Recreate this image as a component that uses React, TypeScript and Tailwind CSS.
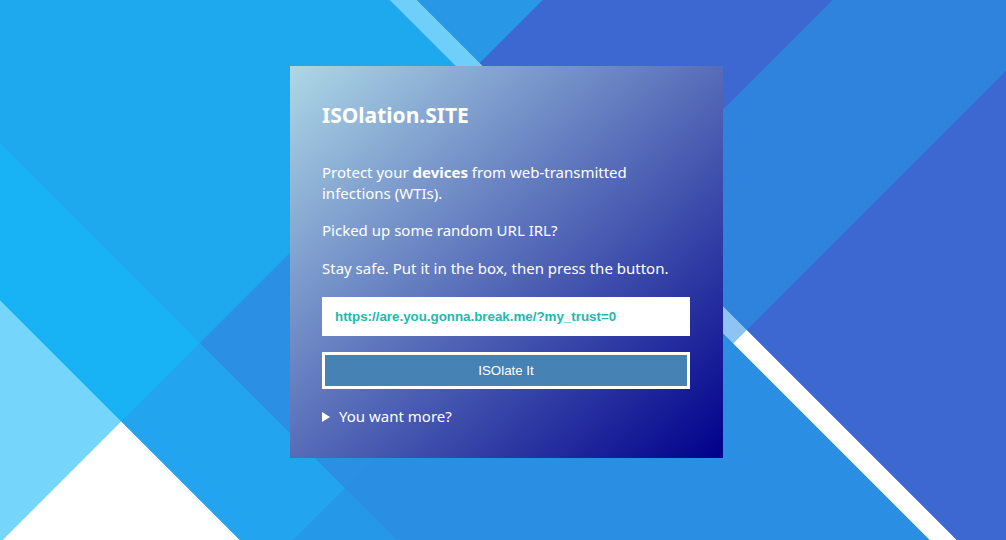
import React from 'react';

// diagonal bands of the backdrop: s = x + y ("/" lines), d = x - y ("\" lines)
const sCuts = [-3000, 543, 833, 1077, 4000];
const dCuts = [-3000, -300, -143, 390, 417, 3000];

const palette = [
  ['#76D5FB', '#18B3F4', '#1EA9EE', '#6FCFF8', '#2898E6'],
  ['#FFFFFF', '#22A4EF', '#2B8FE3', '#8DC4F3', '#3D68D2'],
  ['#FFFFFF', '#2598E7', '#2A8FE3', '#8DC4F3', '#3083DD'],
  ['#FFFFFF', '#2598E7', '#2A8FE3', '#FFFFFF', '#3D68D2'],
];

function cell(s1: number, s2: number, d1: number, d2: number) {
  const pt = (s: number, d: number) => `${(s + d) / 2},${(s - d) / 2}`;
  return [pt(s1, d1), pt(s1, d2), pt(s2, d2), pt(s2, d1)].join(' ');
}

function Backdrop() {
  const cells: React.ReactNode[] = [];
  for (let i = 0; i < sCuts.length - 1; i++) {
    for (let j = 0; j < dCuts.length - 1; j++) {
      cells.push(
        <polygon
          key={`${i}-${j}`}
          points={cell(sCuts[i], sCuts[i + 1], dCuts[j], dCuts[j + 1])}
          fill={palette[i][j]}
          stroke={palette[i][j]}
          strokeWidth={0.6}
        />
      );
    }
  }
  return (
    <svg
      className="absolute inset-0 h-full w-full"
      viewBox="0 0 1006 540"
      preserveAspectRatio="xMidYMid slice"
      aria-hidden="true"
    >
      <rect width="1006" height="540" fill="#2A8FE3" />
      {cells}
    </svg>
  );
}

export default function App() {
  return (
    <div className="relative min-h-screen overflow-hidden font-['Noto_Sans',sans-serif]">
      <Backdrop />
      <div className="relative flex justify-center pt-[66px] pl-[7px]">
        <main className="w-[433px] bg-[linear-gradient(to_bottom_right,#ADD8E6,#00008B)] pt-[35px] pb-[31px] pl-8 pr-[33px] text-white">
          <h1 className="mb-[33px] text-[21px] leading-[28px] font-bold">ISOlation.SITE</h1>
          <p className="text-[15px] leading-[21px]">
            Protect your <strong className="font-bold">devices</strong> from web-transmitted infections (WTIs).
          </p>
          <p className="mt-4 text-[15px] leading-[21px]">Picked up some random URL IRL?</p>
          <p className="mt-[17px] text-[15px] leading-[21px]">Stay safe. Put it in the box, then press the button.</p>
          <form className="mt-[18px] flex flex-col gap-4" onSubmit={(e) => e.preventDefault()}>
            <input
              type="text"
              defaultValue="https://are.you.gonna.break.me/?my_trust=0"
              className="h-[39px] w-full bg-white pl-[13px] font-['Liberation_Sans',Arial,sans-serif] text-[13.33px] font-bold text-[#22B8B0] outline-none"
            />
            <button
              type="submit"
              className="h-[37px] w-full border-[3px] border-white bg-[#4682B4] font-['Liberation_Sans',Arial,sans-serif] text-[13.33px] text-white"
            >
              ISOlate It
            </button>
          </form>
          <details className="mt-[17px]">
            <summary className="flex cursor-pointer items-center gap-[9px] text-[15px] leading-[21px]">
              <svg width="8" height="10" viewBox="0 0 8 10" className="shrink-0">
                <path d="M0 0 L8 5 L0 10 Z" fill="white" />
              </svg>
              You want more?
            </summary>
          </details>
        </main>
      </div>
    </div>
  );
}
